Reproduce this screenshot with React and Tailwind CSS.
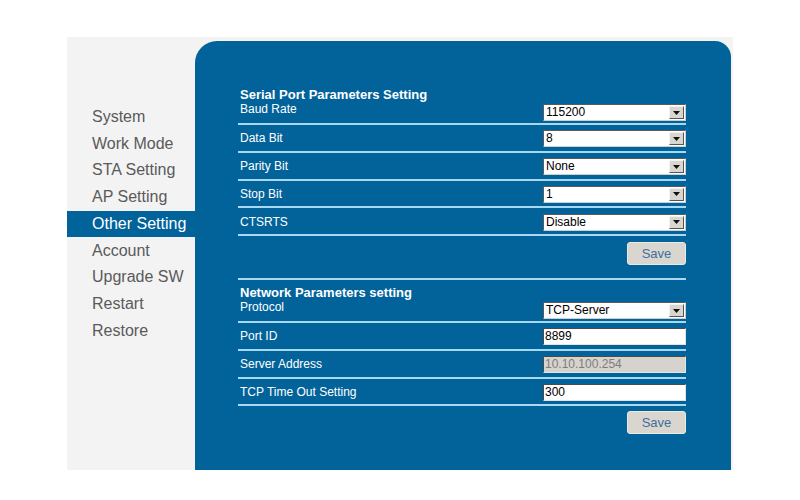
import React from 'react';

const menu = ['System', 'Work Mode', 'STA Setting', 'AP Setting', 'Other Setting', 'Account', 'Upgrade SW', 'Restart', 'Restore'];

function Select({ value }) {
  return (
    <div className="w-[143px] h-[17px] bg-white border border-t-[#5a5a5a] border-l-[#5a5a5a] border-r-[#cfcfcf] border-b-[#cfcfcf] flex items-stretch text-[12px] text-black">
      <span className="flex-1 pl-[2px] leading-[15px]">{value}</span>
      <span className="w-[15px] my-[1px] mr-[1px] bg-[#d9d6cf] border border-t-[#f2f2f2] border-l-[#f2f2f2] border-r-[#555] border-b-[#555] flex items-center justify-center">
        <svg width="7" height="4" viewBox="0 0 7 4"><path d="M0 0h7L3.5 4z" fill="#111" /></svg>
      </span>
    </div>
  );
}

function Input({ value, disabled }) {
  return (
    <div
      className={
        'w-[143px] h-[17px] border border-t-[#4a4a4a] border-l-[#4a4a4a] border-r-[#e4e4e4] border-b-[#e4e4e4] text-[12px] leading-[15px] pl-[1px] ' +
        (disabled ? 'bg-[#d6d3ce] text-[#7d7d7d]' : 'bg-white text-black')
      }
    >
      {value}
    </div>
  );
}

function Row({ label, children }) {
  return (
    <div className="h-[27.75px] pt-[2px] flex items-center justify-between border-b-2 border-[#a9d9f2]">
      <span className="pl-[2px] text-[12px] leading-[15px] text-white">{label}</span>
      {children}
    </div>
  );
}

function FirstRow({ heading, label, children }) {
  return (
    <div>
      <div className="pl-[2px] text-[13px] leading-[15px] font-bold text-white">{heading}</div>
      <div className="h-[23px] flex justify-between border-b-2 border-[#a9d9f2]">
        <span className="pl-[2px] text-[12px] leading-[15px] text-white">{label}</span>
        <div className="self-end mb-[2px]">{children}</div>
      </div>
    </div>
  );
}

function SaveButton() {
  return (
    <div className="flex justify-end">
      <div className="w-[59px] h-[23px] rounded-[3px] bg-[#d9d6cf] border border-[#ebe9e4] flex items-center justify-center text-[13px] text-[#3f6f9f]">
        Save
      </div>
    </div>
  );
}

export default function App() {
  return (
    <div className="w-[800px] h-[500px] bg-white pt-[37px] pl-[67px]" style={{ fontFamily: '"Liberation Sans", Arial, sans-serif' }}>
      <div className="w-[666px] h-[433px] bg-[#f3f3f3] flex">
        <div className="w-[128px] pt-[66.6px]">
          {menu.map((m) => (
            <div
              key={m}
              className={
                'h-[26.75px] pl-[25px] flex items-center text-[16px] ' +
                (m === 'Other Setting' ? 'bg-[#02639b] text-white' : 'text-[#5a5a5a]')
              }
            >
              {m}
            </div>
          ))}
        </div>
        <div className="w-[536px] mt-[4px] bg-[#02639b] rounded-tl-[22px] rounded-tr-[16px] pl-[43px] pr-[45px] pt-[46px]">
          <FirstRow heading="Serial Port Parameters Setting" label="Baud Rate">
            <Select value="115200" />
          </FirstRow>
          <Row label="Data Bit"><Select value="8" /></Row>
          <Row label="Parity Bit"><Select value="None" /></Row>
          <Row label="Stop Bit"><Select value="1" /></Row>
          <Row label="CTSRTS"><Select value="Disable" /></Row>
          <div className="mt-[6px]"><SaveButton /></div>
          <div className="mt-[13px] border-b-2 border-[#a9d9f2]" />
          <div className="mt-[5px]">
            <FirstRow heading="Network Parameters setting" label="Protocol">
              <Select value="TCP-Server" />
            </FirstRow>
          </div>
          <Row label="Port ID"><Input value="8899" /></Row>
          <Row label="Server Address"><Input value="10.10.100.254" disabled /></Row>
          <Row label="TCP Time Out Setting"><Input value="300" /></Row>
          <div className="mt-[5px]"><SaveButton /></div>
        </div>
      </div>
    </div>
  );
}
